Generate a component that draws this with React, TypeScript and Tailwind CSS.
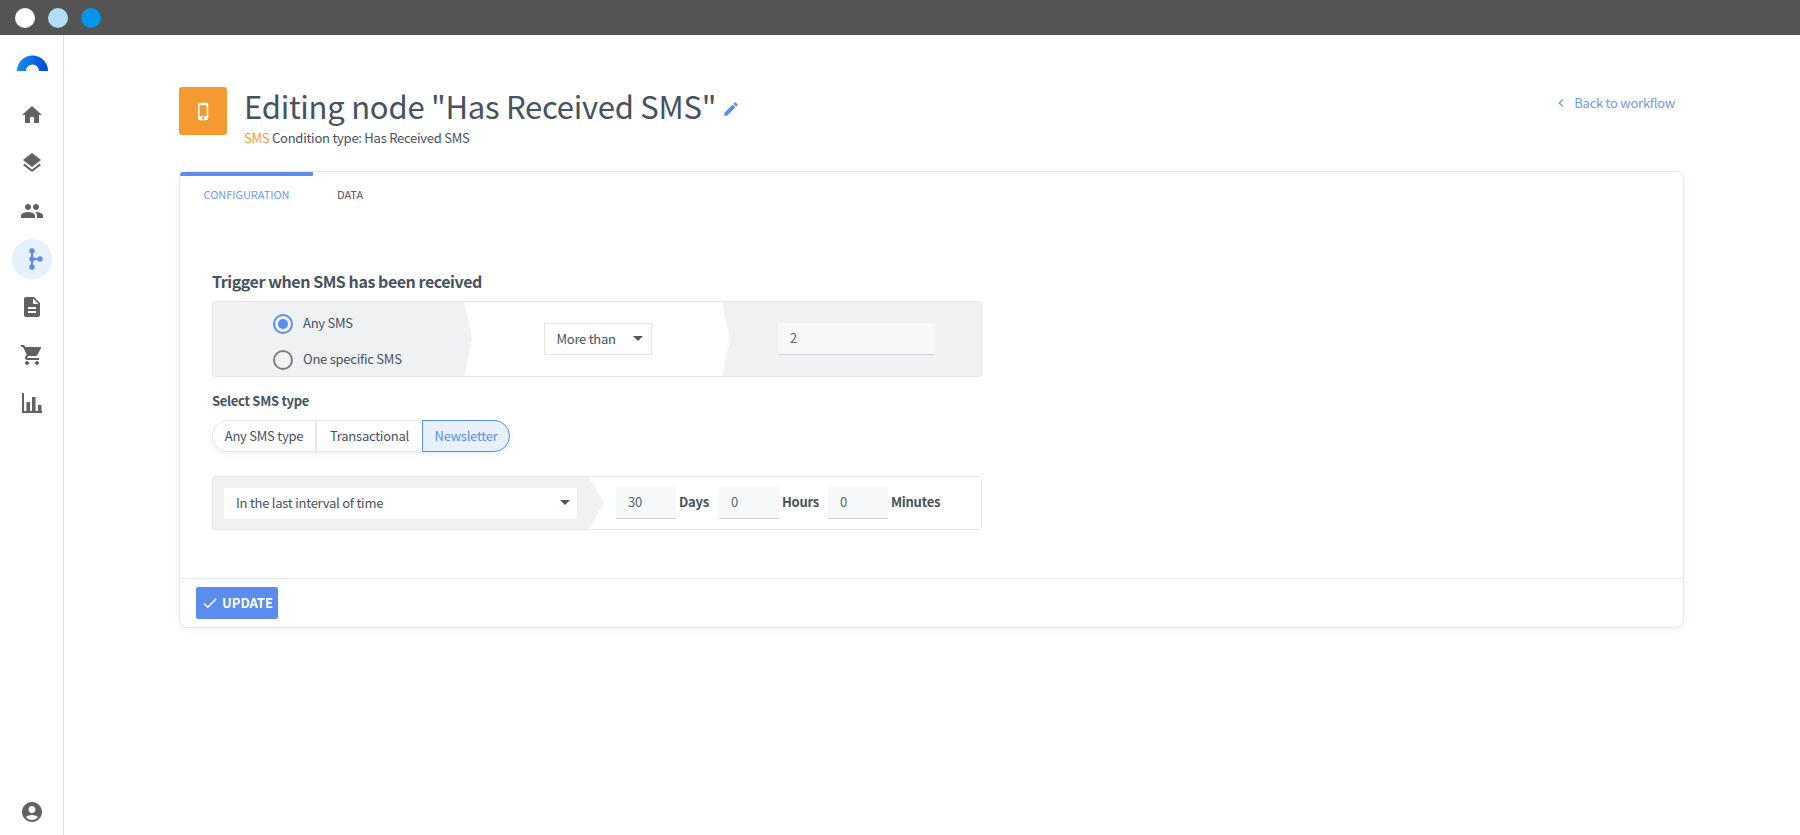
import { MdHome, MdLayers, MdPeople, MdDescription, MdShoppingCart, MdAccountCircle, MdEdit, MdPhoneIphone, MdChevronLeft, MdCheck } from "react-icons/md";

const Caret = () => (
  <svg width="10" height="5" viewBox="0 0 10 5" className="shrink-0">
    <path d="M0 0h10L5 5z" fill="#4b5763" />
  </svg>
);

const NumberField = ({ value, className }: { value: string; className: string }) => (
  <div className={`h-8 bg-[#f7f8fa] border-b border-[#cfd4da] flex items-center pb-[2px] text-[13px] tracking-[-0.25px] text-[#5a6570] ${className}`}>{value}</div>
);

const Logo = () => (
  <svg width="31" height="16" viewBox="0 0 31 16">
    <defs>
      <linearGradient id="lg" x1="0" y1="0" x2="1" y2="0">
        <stop offset="0" stopColor="#1b8fe8" />
        <stop offset="1" stopColor="#0046d8" />
      </linearGradient>
    </defs>
    <path d="M0 16A15.5 15.5 0 0 1 31 16H22A6.500 6.500 0 0 0 9 16Z" fill="url(#lg)" />
  </svg>
);

const Branch = () => (
  <svg width="24" height="24" viewBox="0 0 24 24" fill="#5b8def">
    <rect x="11" y="3" width="2" height="18" />
    <rect x="12" y="11" width="8" height="2" />
    <circle cx="12" cy="4" r="2.700" />
    <circle cx="12" cy="12" r="2.700" />
    <circle cx="12" cy="20" r="2.700" />
    <circle cx="20" cy="12" r="2.700" />
  </svg>
);

const Chart = () => (
  <svg width="24" height="24" viewBox="0 0 24 24" fill="#616161">
    <path d="M2 2h2v18h18v2H2z" />
    <rect x="6.500" y="11" width="3.500" height="9" />
    <rect x="12" y="6" width="3.500" height="14" />
    <rect x="18" y="14" width="3.500" height="6" />
  </svg>
);

const navClass = "w-10 h-12 flex items-center justify-center text-[#616161]";

export default function App() {
  return (
    <div className="h-screen flex flex-col overflow-hidden bg-white text-[#46525e] font-['Noto_Sans_CJK_SC','Source_Sans_Pro','Open_Sans',sans-serif]">
      <div className="h-[35px] shrink-0 bg-[#545454] flex items-center gap-[13px] pl-[15px]">
        <span className="w-5 h-5 rounded-full bg-white" />
        <span className="w-5 h-5 rounded-full bg-[#b3dcf7]" />
        <span className="w-5 h-5 rounded-full bg-[#0594e8]" />
      </div>
      <div className="flex-1 flex min-h-0">
        <aside className="w-[64px] shrink-0 border-r border-[#dedede] flex flex-col items-center pl-[1px] pt-[20px] pb-[11px]">
          <Logo />
          <div className="flex flex-col items-center mt-[20px]">
            <div className={navClass}><MdHome size={24} /></div>
            <div className={navClass}><MdLayers size={24} /></div>
            <div className={navClass}><MdPeople size={24} /></div>
            <div className="w-10 h-10 my-1 rounded-full bg-[#e5f1fe] flex items-center justify-center"><Branch /></div>
            <div className={navClass}><MdDescription size={24} /></div>
            <div className={navClass}><MdShoppingCart size={24} /></div>
            <div className={navClass}><Chart /></div>
          </div>
          <div className="mt-auto text-[#616161]"><MdAccountCircle size={24} /></div>
        </aside>
        <main className="flex-1 min-w-0 pl-[115px] pr-[116px] pt-[52px]">
          <header className="flex justify-between items-start h-[48px]">
            <div className="flex gap-[17px]">
              <div className="w-12 h-12 rounded-[3px] bg-[#f59a31] flex items-center justify-center text-white"><MdPhoneIphone size={19} /></div>
              <div>
                <div className="flex items-center gap-[6px] h-[36px] mt-[1px]">
                  <h1 className="text-[31px] tracking-[-0.25px] leading-[36px] font-normal text-[#46525e] whitespace-nowrap">Editing node "Has Received SMS"</h1>
                  <MdEdit size={18} className="text-[#5b8def] mt-[6px]" />
                </div>
                <div className="text-[13px] tracking-[-0.25px] leading-[18px] mt-[5px] whitespace-nowrap">
                  <span className="text-[#f59a31]">SMS</span> Condition type: Has Received SMS
                </div>
              </div>
            </div>
            <div className="flex items-center text-[13px] tracking-[-0.25px] leading-[18px] text-[#6f9bf0] mt-[7px] mr-[9px] whitespace-nowrap">
              <MdChevronLeft size={16} className="mr-[5px]" />
              Back to workflow
            </div>
          </header>
          <section className="mt-[36px] h-[457px] border border-[#e8e8e8] rounded-lg shadow-[0_2px_8px_rgba(0,0,0,0.05)] flex flex-col">
            <div className="flex h-[46px]">
              <div className="w-[133px] relative flex items-center justify-center pb-[2px] text-[11px] tracking-[-0.05px] text-[#6f9bf0]">
                <span className="absolute top-0 left-0 w-full h-1 bg-[#5b8def] rounded-b-[3px] rounded-tl-lg" />
                CONFIGURATION
              </div>
              <div className="pl-6 flex items-center pb-[2px] text-[11px] tracking-[-0.05px] text-[#46525e]">DATA</div>
            </div>
            <div className="flex-1 pl-8 pt-[53px]">
              <h2 className="text-[16px] tracking-[-0.45px] leading-[22px] font-bold -mt-[1px]">Trigger when SMS has been received</h2>
              <div className="w-[770px] h-[76px] mt-[9px] border border-[#e4e6e9] rounded-[3px] flex overflow-hidden">
                <div className="w-[259px] bg-[#f0f1f3] [clip-path:polygon(0_0,251px_0,100%_50%,251px_100%,0_100%)] flex flex-col pl-[60px] pt-[12px] gap-[16px] text-[13px] tracking-[-0.25px] leading-[20px]">
                  <div className="flex items-center gap-[10px]">
                    <span className="w-5 h-5 rounded-full border-2 border-[#5b8def] flex items-center justify-center"><span className="w-[10px] h-[10px] rounded-full bg-[#5b8def]" /></span>
                    <span className="-mt-[3px]">Any SMS</span>
                  </div>
                  <div className="flex items-center gap-[10px]">
                    <span className="w-5 h-5 rounded-full border-2 border-[#808080]" />
                    <span className="-mt-[3px]">One specific SMS</span>
                  </div>
                </div>
                <div className="w-[250px] flex items-center justify-center pl-[1px]">
                  <div className="w-[108px] h-8 border border-[#e4e6e9] flex items-center justify-between pl-[12px] pr-[8px] pb-[1px] text-[13px] tracking-[-0.25px]">
                    More than
                    <Caret />
                  </div>
                </div>
                <div className="flex-1 bg-[#f0f1f3] [clip-path:polygon(0_0,100%_0,100%_100%,0_100%,8px_50%)] flex items-center pl-[56px]">
                  <NumberField value="2" className="w-[157px] pl-[12px]" />
                </div>
              </div>
              <div className="text-[13px] tracking-[-0.3px] leading-[18px] font-bold mt-[15px]">Select SMS type</div>
              <div className="inline-flex h-[32px] mt-[10px] rounded-full shadow-[0_2px_6px_rgba(0,0,0,0.07)] text-[13px] tracking-[-0.25px]">
                <div className="w-[105px] border border-[#e8e8e8] border-r-2 rounded-l-full flex items-center justify-center pb-[1px]">Any SMS type</div>
                <div className="w-[105px] border-y border-[#e8e8e8] flex items-center justify-center pb-[1px]">Transactional</div>
                <div className="w-[88px] border border-[#5b8def] rounded-r-full bg-[#e7f1fe] text-[#5b8def] flex items-center justify-center pb-[1px]">Newsletter</div>
              </div>
              <div className="w-[770px] h-[54px] mt-[24px] border border-[#e4e6e9] rounded-[3px] flex overflow-hidden">
                <div className="w-[391px] shrink-0 bg-[#f0f1f3] [clip-path:polygon(0_0,376px_0,100%_50%,376px_100%,0_100%)] flex items-center pl-[11px]">
                  <div className="w-[353px] h-[31px] bg-white flex items-center justify-between pl-[12px] pr-[7px] pb-[1px] text-[13px] tracking-[-0.25px]">
                    In the last interval of time
                    <Caret />
                  </div>
                </div>
                <div className="flex-1 flex items-center pl-[12px] text-[13px] tracking-[-0.25px] font-bold">
                  <NumberField value="30" className="w-[60px] pl-[12px] font-normal" />
                  <span className="w-[43px] pl-[3px] pb-[2px]">Days</span>
                  <NumberField value="0" className="w-[60px] pl-[12px] font-normal" />
                  <span className="w-[49px] pl-[3px] pb-[2px]">Hours</span>
                  <NumberField value="0" className="w-[60px] pl-[12px] font-normal" />
                  <span className="pl-[3px] pb-[2px]">Minutes</span>
                </div>
              </div>
            </div>
            <div className="h-[49px] border-t border-[#e8e8e8] pl-4 pt-2">
              <button className="w-[82px] h-8 rounded-[2px] bg-[#5b8def] text-white text-[13px] font-bold flex items-center justify-center gap-[3px]">
                <MdCheck size={18} />
                UPDATE
              </button>
            </div>
          </section>
        </main>
      </div>
    </div>
  );
}
